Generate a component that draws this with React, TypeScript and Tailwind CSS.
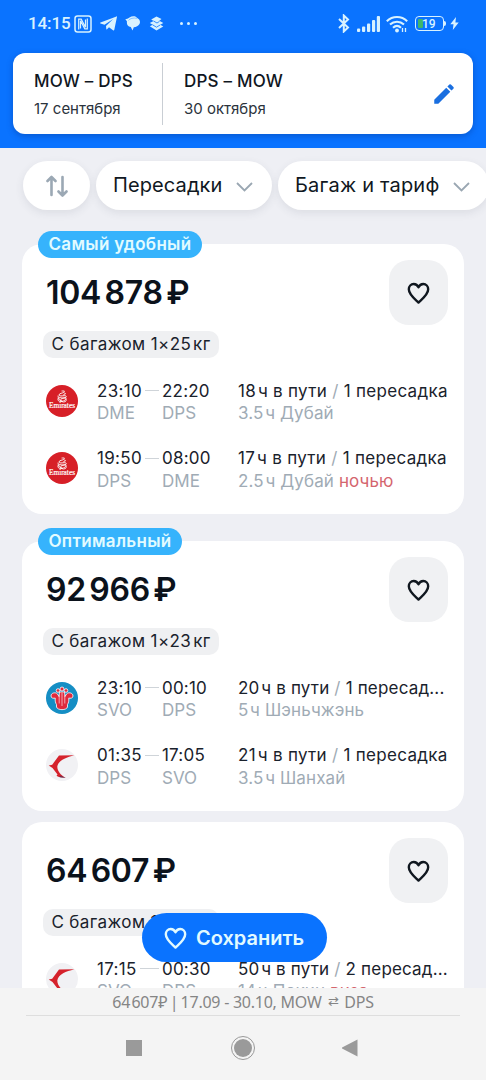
import type { ReactNode } from "react"

type Segment = {
  airline: "emirates" | "southern" | "eastern"
  depart: string
  arrive: string
  from: string
  to: string
  duration: string
  transfers: string
  layover: string
  warning?: string
}

type Ticket = {
  badge?: string
  badgeWidth?: string
  price: string
  baggage: string
  segments: Segment[]
}

const tickets: Ticket[] = [
  {
    badge: "Самый удобный",
    badgeWidth: "w-[164px]",
    price: "104\u2009878\u2009₽",
    baggage: "С багажом 1×25\u200Aкг",
    segments: [
      { airline: "emirates", depart: "23:10", arrive: "22:20", from: "DME", to: "DPS", duration: "18\u200Aч в пути", transfers: "1 пересадка", layover: "3.5\u200Aч Дубай" },
      { airline: "emirates", depart: "19:50", arrive: "08:00", from: "DPS", to: "DME", duration: "17\u200Aч в пути", transfers: "1 пересадка", layover: "2.5\u200Aч Дубай", warning: "ночью" },
    ],
  },
  {
    badge: "Оптимальный",
    badgeWidth: "w-[144px]",
    price: "92\u2009966\u2009₽",
    baggage: "С багажом 1×23\u200Aкг",
    segments: [
      { airline: "southern", depart: "23:10", arrive: "00:10", from: "SVO", to: "DPS", duration: "20\u200Aч в пути", transfers: "1 пересад...", layover: "5\u200Aч Шэньчжэнь" },
      { airline: "eastern", depart: "01:35", arrive: "17:05", from: "DPS", to: "SVO", duration: "21\u200Aч в пути", transfers: "1 пересадка", layover: "3.5\u200Aч Шанхай" },
    ],
  },
  {
    price: "64\u2009607\u2009₽",
    baggage: "С багажом 1×23\u200Aкг",
    segments: [
      { airline: "eastern", depart: "17:15", arrive: "00:30", from: "SVO", to: "DPS", duration: "50\u200Aч в пути", transfers: "2 пересад...", layover: "14\u200Aч Пекин", warning: "виза" },
    ],
  },
]

function Heart({ className }: { className: string }) {
  return (
    <svg viewBox="0 0 24 24" className={className} fill="none" stroke="currentColor" strokeWidth="2.5" strokeLinejoin="round">
      <path d="M12 22.500C9.200 19.700 1.900 14.500 1.900 8.700 1.900 5.400 4.200 3.100 7 3.100c2.100 0 4 1.300 5 3.500 1-2.200 2.900-3.500 5-3.500 2.800 0 5.100 2.300 5.100 5.600 0 5.800-7.300 11-10.100 13.800Z" />
    </svg>
  )
}

function AirlineLogo({ airline }: { airline: Segment["airline"] }) {
  if (airline === "emirates") {
    return (
      <svg viewBox="0 0 32 32" className="size-8 shrink-0">
        <circle cx="16" cy="16" r="16" fill="#d71f27" />
        <g fill="none" stroke="#fff" strokeWidth="0.9" strokeLinecap="round">
          <path d="M16 6c2 0 3-.5 2 1s-5 1-5 3 6 0 7 1-1 3-4 2-4.500 0-4 2 5 2 7 0 1-3-2-2-3 3-1 3" />
          <path d="M12 11c0 3 2 5 5 6M18.500 8c2 0 1 2-1 2M20 14c1 1 0 3-2 3" />
        </g>
        <text x="16" y="22.8" fill="#fff" fontSize="7.5" fontFamily="Liberation Serif, serif" stroke="#fff" strokeWidth="0.2" textAnchor="middle" textLength="26" lengthAdjust="spacingAndGlyphs">
          Emirates
        </text>
      </svg>
    )
  }
  if (airline === "southern") {
    return (
      <svg viewBox="0 0 32 32" className="size-8 shrink-0">
        <circle cx="16" cy="16" r="16" fill="#158ec4" />
        <g fill="#e02a3c" stroke="#fff" strokeWidth="0.8" strokeLinejoin="round">
          <circle cx="12" cy="8.5" r="1.8" />
          <circle cx="20" cy="8.5" r="1.8" />
          <circle cx="16" cy="7" r="2" />
          <path d="M5 14c0-3.500 5-4 6.500-2l1.500 2.500.5-4.500h5l.5 4.500 1.500-2.500c1.500-2 6.500-1.500 6.500 2 0 2.500-3 2.500-4.200 2 .2 3-.3 5-1.300 6.500v2.500c-1 3.500-10 3.500-11 0v-2.500c-1-1.500-1.500-3.500-1.300-6.500-1.200.5-4.200.5-4.200-2Z" />
          <path d="M13.2 13.500v8M16 11v13M18.800 13.500v8" fill="none" strokeWidth="0.6" />
        </g>
      </svg>
    )
  }
  return (
    <svg viewBox="0 0 32 32" className="size-8 shrink-0">
      <circle cx="16" cy="16" r="16" fill="#f1f1f4" />
      <path d="M13 6.600 28.300 6.200C20 8.500 12.500 11 11.300 17.500c0 4.500 3.200 8.500 8.400 11.200-4 0-7.200-.5-9.200-1.900l1-1.300-5-6.500-3.800-2.500 3.500-.8Z" fill="#d5222c" />
      <path d="m14.500 26.500 5.200 2.200c-2.500 0-4.700-.2-6.500-.8Z" fill="#33335c" opacity=".6" />
    </svg>
  )
}

function StatusBar() {
  return (
    <div className="flex h-[53px] items-start justify-between pt-3 pr-[27px] pl-7 text-[#d8f2ff]">
      <div className="flex h-[23px] items-center">
        <span className="w-[46px] font-[Roboto] text-[17px] font-medium tracking-[-0.1px] whitespace-nowrap">14:15</span>
        <svg viewBox="0 0 18 18" className="size-[18px]" fill="none" stroke="currentColor" strokeWidth="1.5">
          <rect x="1" y="1" width="16" height="16" rx="2.5" />
          <path d="M4.700 14.500V4.200h2.500l4.300 8V4.500M13.300 3.500v10.300h-2.500l-4.300-8v7.700" strokeWidth="1.2" />
        </svg>
        <svg viewBox="0 0 17 15" className="ml-2 h-[15px] w-[17px]" fill="currentColor">
          <path d="M16.500.4c.4-.2.6 0 .5.4l-2.700 13c-.2.7-.7.9-1.300.5l-4-3-2 2c-.3.3-.7.2-.7-.3L6 10l7.200-7L4.500 8.700.5 7.400c-.6-.2-.6-.6 0-.9Z" />
        </svg>
        <svg viewBox="0 0 16 15" className="ml-2 h-[15px] w-4" fill="currentColor">
          <path d="M4.500 1.500C7-.3 11-.2 12.500 2.300 15 3.500 15.500 6 14.500 8c-1 2-3.500 3.200-5.700 3.300L7.500 14.500 5.800 11C2.500 10.500 1.500 8 2 5.600L.3 3C1.500 3 3 2.500 4.500 1.500Z" />
          <path d="M3.500 4.500c1-2 5-3 8.500-2.200" fill="none" stroke="#0a73ff" strokeWidth=".4" />
        </svg>
        <svg viewBox="0 0 15 15" className="ml-2 size-[15px]" fill="currentColor">
          <path d="m7.500.5 5 2.600-2.200 1.600 4 2.400-3 1.600 3 1.700-6.800 4L.8 10.300l3-1.500L.8 7l3.800-2L2.200 3.400Z" />
          <path d="m4.500 5 3.500 2 2.500-1.600M3.500 8.800l4 2.400 3.800-2.300" fill="none" stroke="#0a73ff" strokeWidth=".8" />
        </svg>
        <div className="ml-4 flex gap-1">
          <i className="size-[3px] rounded-full bg-current" />
          <i className="size-[3px] rounded-full bg-current" />
          <i className="size-[3px] rounded-full bg-current" />
        </div>
      </div>
      <div className="flex h-[23px] items-center">
        <svg viewBox="0 0 12 19" className="h-[19px] w-3" fill="none" stroke="currentColor" strokeWidth="2">
          <path d="m1 5 9 8.500-4.200 4V1.500l4.200 4L1 14" />
        </svg>
        <svg viewBox="0 0 23 16" className="ml-[7px] h-4 w-[23px]" fill="currentColor">
          <rect x="0" y="12.5" width="3.2" height="3.5" rx="1" />
          <rect x="5" y="10.5" width="3.2" height="5.5" rx="1" />
          <rect x="10" y="7.5" width="3.2" height="8.5" rx="1" />
          <rect x="15" y="4" width="3.2" height="12" rx="1" />
          <rect x="19.8" y="0" width="3.2" height="16" rx="1" />
        </svg>
        <svg viewBox="0 0 22 18" className="ml-1.5 h-[18px] w-[22px]" fill="none" stroke="currentColor" strokeWidth="2.1">
          <path d="M.8 6.200c5.800-5.600 14.600-5.600 20.400 0M4 9.600c4-3.800 10-3.800 14 0M7 12.800c2.400-2.200 5.600-2.200 8 0" />
          <circle cx="11" cy="15.5" r="1.9" fill="currentColor" stroke="none" />
          <path d="M16.500 13v4M19.500 13v4" strokeWidth="1.3" />
        </svg>
        <div className="ml-[7px] flex h-[15px] w-[29px] items-center rounded border-[1.5px] border-current p-0.5">
          <i className="h-[9px] w-[5px] rounded-[1px] bg-[#3fb56b]" />
          <span className="-ml-px font-[Roboto] text-[12px] leading-none font-medium">19</span>
        </div>
        <i className="h-[5px] w-0.5 rounded-r bg-current" />
        <svg viewBox="0 0 9 13" className="ml-1 h-[13px] w-[9px]" fill="currentColor">
          <path d="M6 0 .3 7.300h3.200L2.800 13l5.900-7.500H5.400Z" />
        </svg>
      </div>
    </div>
  )
}

function Chip({ width, children }: { width: string; children: ReactNode }) {
  return (
    <div className={`flex h-[49px] shrink-0 items-center justify-between rounded-full bg-white pr-[19px] pl-[17px] text-[20px] tracking-[0.1px] whitespace-nowrap text-[#101822] shadow-[0_3px_8px_rgba(60,70,90,0.1)] ${width}`}>
      <span className="-mt-px">{children}</span>
      <svg viewBox="0 0 17 10" className="mt-0.5 h-2.5 w-[17px]" fill="none" stroke="#9aa7b2" strokeWidth="1.8">
        <path d="m1 1 7.500 7.500L16 1" />
      </svg>
    </div>
  )
}

function SegmentRow({ segment }: { segment: Segment }) {
  const truncated = segment.transfers.endsWith("...")

  return (
    <div className="flex h-[45px] items-center text-[17px] leading-[22.5px] whitespace-nowrap text-[#1a222c]">
      <div className="-mt-[3px]">
        <AirlineLogo airline={segment.airline} />
      </div>
      <div className="ml-[19px] w-[65px] shrink-0">
        <div className="flex items-center tracking-[0.3px]">
          {segment.depart}
          <i className="mr-[3px] ml-[3px] h-px flex-1 bg-[#cfd4d9]" />
        </div>
        <div className="text-[#a0abb5]">{segment.from}</div>
      </div>
      <div className="w-[76px] shrink-0">
        <div className="tracking-[0.2px]">{segment.arrive}</div>
        <div className="text-[#a0abb5]">{segment.to}</div>
      </div>
      <div>
        <div className={truncated ? "tracking-[0.18px]" : "tracking-[0.3px]"}>
          {segment.duration} <span className="text-[#a0abb5]">/</span> {segment.transfers}
        </div>
        <div className="tracking-[0.12px] text-[#a0abb5]">
          {segment.layover} {segment.warning && <span className="text-[#d4656e]">{segment.warning}</span>}
        </div>
      </div>
    </div>
  )
}

function TicketCard({ ticket }: { ticket: Ticket }) {
  return (
    <div className="relative h-[270px] shrink-0 rounded-[20px] bg-white pt-4">
      {ticket.badge && (
        <div className={`absolute -top-[13px] left-4 flex h-[27px] items-center justify-center rounded-full bg-[#36b3fc] text-[17px] font-semibold tracking-[0.3px] whitespace-nowrap text-[#e2fbff] ${ticket.badgeWidth}`}>
          {ticket.badge}
        </div>
      )}
      <div className="flex h-[65px] items-center justify-between pr-4 pl-6">
        <div className="text-[32px] font-semibold tracking-[-0.3px] [word-spacing:-1px] whitespace-nowrap text-[#0b121b]">
          {ticket.price.split("\u2009").map((part, i) => (
            <span key={i} className={i > 0 ? "-ml-[1.5px]" : ""}>
              {i > 0 && "\u2009"}
              {part}
            </span>
          ))}
        </div>
        <button className="flex h-[65px] w-[59px] items-center justify-center rounded-[20px] bg-[#f0f1f3] text-[#10171f]">
          <Heart className="size-[23px]" />
        </button>
      </div>
      <div className="mt-1.5 ml-[21px] flex h-[27px] w-44 items-center justify-center rounded-[10px] bg-[#eff0f2] text-[17px] tracking-[0.4px] whitespace-nowrap text-[#1a222c]">
        {ticket.baggage}
      </div>
      <div className="mt-[21.5px] flex flex-col gap-[22.5px] pl-6">
        {ticket.segments.map((segment) => (
          <SegmentRow key={segment.depart + segment.from} segment={segment} />
        ))}
      </div>
    </div>
  )
}

export default function App() {
  return (
    <div className="relative flex h-[1080px] w-[486px] flex-col overflow-hidden bg-[#eeeff4] font-[Inter,sans-serif]">
      <header className="h-[148px] shrink-0 bg-[#0a73ff]">
        <StatusBar />
        <div className="mx-[13px] flex h-[81px] items-center rounded-xl bg-white pr-4 pl-[21px] text-[#10171f] shadow-[0_2px_6px_rgba(0,40,120,0.35)]">
          <div className="w-[128px] pt-0.5">
            <div className="text-[17px] leading-7 font-medium tracking-[0.2px]">MOW – DPS</div>
            <div className="text-[15px] leading-7 text-[#2b333c]">17 сентября</div>
          </div>
          <div className="h-[62px] w-px bg-[#c9ced4]" />
          <div className="flex-1 pt-0.5 pl-[21px]">
            <div className="text-[17px] leading-7 font-medium tracking-[0.2px]">DPS – MOW</div>
            <div className="text-[15px] leading-7 text-[#2b333c]">30 октября</div>
          </div>
          <svg viewBox="0 0 24 24" className="size-[26px]" fill="#1a6fe0">
            <path d="M3 17.250V21h3.750L17.810 9.940l-3.750-3.750ZM20.710 7.040a1 1 0 0 0 0-1.410l-2.340-2.340a1 1 0 0 0-1.410 0l-1.830 1.830 3.750 3.750Z" />
          </svg>
        </div>
      </header>

      {/* Filters */}
      <div className="mt-[13px] flex shrink-0 gap-1.5 pl-[23px]">
        <div className="flex h-[49px] w-[67px] shrink-0 items-center justify-center rounded-full bg-white shadow-[0_3px_8px_rgba(60,70,90,0.1)]">
          <svg viewBox="0 0 22 22" className="size-[22px]" fill="none" stroke="#9ba8b4" strokeWidth="2.6" strokeLinecap="round" strokeLinejoin="round">
            <path d="M5.500 20V2M1.500 6l4-4 4 4" />
            <path d="M16.500 2v18M12.500 16.500l4 4 4-4" />
          </svg>
        </div>
        <Chip width="w-[176px]">Пересадки</Chip>
        <Chip width="w-[211px]">
          <span className="tracking-[0.2px]">Багаж и тариф</span>
        </Chip>
      </div>

      {/* Tickets */}
      <main className="flex min-h-0 flex-1 flex-col overflow-hidden px-[22px] pt-[34px]">
        <TicketCard ticket={tickets[0]} />
        <div className="mt-[27px] shrink-0">
          <TicketCard ticket={tickets[1]} />
        </div>
        <div className="mt-[11px] shrink-0">
          <TicketCard ticket={tickets[2]} />
        </div>
      </main>

      <button className="absolute top-[913px] left-[142px] flex h-[49px] w-[185px] items-center rounded-full bg-[#0a73ff] pl-[22px] text-[20px] font-semibold text-[#e2faff]">
        <Heart className="mr-[9px] size-[23px]" />
        Сохранить
      </button>

      {/* System navigation */}
      <footer className="h-[92px] shrink-0 bg-[#f4f4f4] px-[26px]">
        <div className="flex h-7 items-center justify-center border-b border-[#dedede] font-['Noto_Sans',sans-serif] text-[16px] tracking-[-0.25px] whitespace-nowrap text-[#858585]">
          64{"\u200A"}607₽&thinsp;|&thinsp;17.09 - 30.10, MOW
          <span className="mx-1.5 text-[13px]">⇄</span>
          DPS
        </div>
        <div className="flex h-16 items-center justify-between pr-[102px] pl-[100px]">
          <i className="size-4 bg-[#9a9a9a]" />
          <div className="ml-px flex size-6 items-center justify-center rounded-full border-[1.5px] border-[#999]">
            <i className="size-[18px] rounded-full bg-[#9a9a9a]" />
          </div>
          <svg viewBox="0 0 16 18" className="h-[18px] w-4" fill="#9a9a9a">
            <path d="M15.500.5v17L.5 9.800a1 1 0 0 1 0-1.600Z" />
          </svg>
        </div>
      </footer>
    </div>
  )
}
